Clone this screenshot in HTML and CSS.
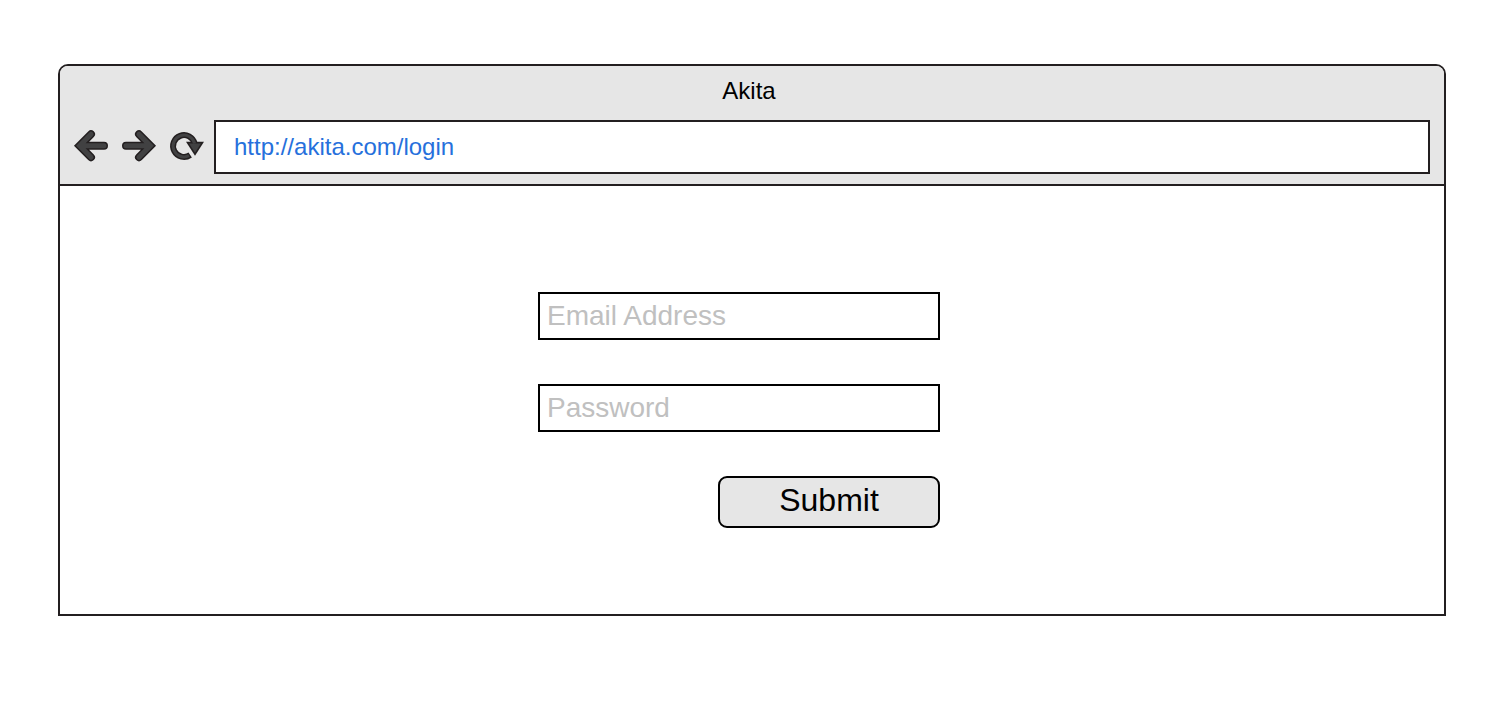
FILE: index.html
```html
<!DOCTYPE html>
<html lang="en">
<head>
<meta charset="utf-8">
<meta name="viewport" content="width=device-width, initial-scale=1">
<title>Akita</title>
<link rel="stylesheet" href="styles.css">
</head>
<body>
<div class="browser">
  <header class="chrome">
    <h1 class="title">Akita</h1>
    <div class="toolbar">
      <nav class="nav" aria-label="Browser controls">
        <button class="nav-button" type="button" aria-label="Back">
          <svg class="icon" viewBox="0 1 34 34" aria-hidden="true">
            <path class="outline" d="M17 5.2 5.6 16.7 17 28.2M8 16.7H30"/>
            <path class="core" d="M17 5.2 5.6 16.7 17 28.2M8 16.7H30"/>
          </svg>
        </button>
        <button class="nav-button" type="button" aria-label="Forward">
          <svg class="icon" viewBox="0 1 34 34" aria-hidden="true">
            <path class="outline" d="M17 5.2 28.4 16.7 17 28.2M26 16.7H4"/>
            <path class="core" d="M17 5.2 28.4 16.7 17 28.2M26 16.7H4"/>
          </svg>
        </button>
        <button class="nav-button" type="button" aria-label="Reload">
          <svg class="icon" viewBox="0 1 34 34" aria-hidden="true">
            <path class="ring" d="M24.6 14.5A10.9 10.9 0 1 0 20.2 26"/>
            <path class="head" d="M16 12.8H34L25 26.8Z"/>
            <path class="ring-core" d="M24.6 14.5A10.9 10.9 0 1 0 19 26.7"/>
            <path class="head-core" d="M19 14.4H31L25 23.8Z"/>
          </svg>
        </button>
      </nav>
      <input class="address" type="text" value="http://akita.com/login" aria-label="Address" spellcheck="false">
    </div>
  </header>
  <main class="page">
    <form class="login">
      <input class="field" type="email" placeholder="Email Address" aria-label="Email Address">
      <input class="field" type="password" placeholder="Password" aria-label="Password">
      <button class="submit" type="submit">Submit</button>
    </form>
  </main>
</div>
</body>
</html>
```
FILE: styles.css
```css
* {
  box-sizing: border-box;
}

body {
  margin: 0;
  padding: 64px 66px 64px 58px;
  background: #fff;
  color: #000;
  font-family: "Liberation Sans", Arial, sans-serif;
}

input,
button {
  margin: 0;
  font-family: inherit;
}

.browser {
  border: 2px solid #231f20;
  border-radius: 10px 10px 0 0;
  overflow: hidden;
}

.chrome {
  padding-bottom: 10px;
  border-bottom: 2px solid #231f20;
  background: #e6e6e6;
}

.title {
  margin: 0;
  padding: 0 6px 4px 0;
  font-size: 24px;
  font-weight: 400;
  line-height: 50px;
  text-align: center;
}

.toolbar {
  display: flex;
  align-items: center;
  gap: 10px;
  padding: 0 14px;
}

.nav {
  display: flex;
  gap: 14px;
}

.nav-button {
  display: block;
  padding: 0;
  border: 0;
  background: none;
}

.icon {
  display: block;
  width: 34px;
  height: 34px;
  overflow: visible;
  fill: none;
  stroke-linecap: round;
}

.outline {
  stroke: #231f20;
  stroke-width: 8;
}

.core {
  stroke: #414142;
  stroke-width: 5;
}

.ring {
  stroke: #231f20;
  stroke-width: 6;
  stroke-linecap: butt;
}

.ring-core {
  stroke: #414142;
  stroke-width: 3;
  stroke-linecap: butt;
}

.head {
  fill: #231f20;
}

.head-core {
  fill: #414142;
}

.address {
  flex: 1;
  min-width: 0;
  height: 54px;
  padding: 0 18px;
  border: 2px solid #231f20;
  border-radius: 0;
  background: #fff;
  color: #2670dc;
  font-size: 24px;
}

.page {
  padding: 106px 26px 86px 0;
}

.login {
  display: flex;
  flex-direction: column;
  gap: 44px;
  width: 100%;
  max-width: 402px;
  margin: 0 auto;
}

.field {
  width: 100%;
  height: 48px;
  padding: 0 7px;
  border: 2px solid #000;
  border-radius: 0;
  background: #fff;
  color: #000;
  font-size: 28px;
}

.field::placeholder {
  color: #c0c0c0;
  opacity: 1;
}

.submit {
  align-self: flex-end;
  width: 222px;
  height: 52px;
  padding: 0 0 4px;
  border: 2px solid #000;
  border-radius: 9px;
  background: #e6e6e6;
  color: #000;
  font-size: 32px;
}
```
